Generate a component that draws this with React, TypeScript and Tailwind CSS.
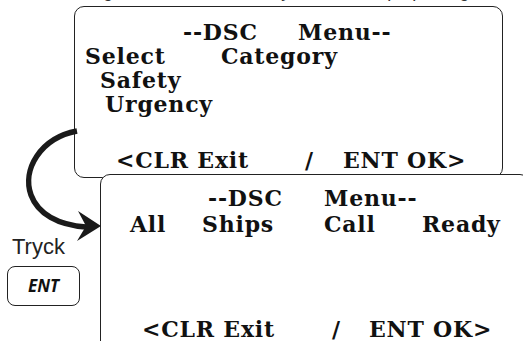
import React from "react";

// LCD-style screen font
const serif = { fontFamily: '"DejaVu Serif", serif' };

const Word: React.FC<{ w?: string; children: React.ReactNode }> = ({ w, children }) => (
  <span className={`inline-block shrink-0 ${w ?? ""}`}>{children}</span>
);

const App: React.FC = () => {
  return (
    <div className="relative w-[523px] h-[341px] overflow-hidden bg-white">
      {/* cut-off line of text above the first screen */}
      <div className="flex h-[6px] overflow-hidden">
        <div
          className="-mt-[18px] pl-[88px] whitespace-pre text-[18px] leading-[18px] text-[#333]"
          style={{ fontFamily: '"Liberation Sans", sans-serif' }}
        >
          Ingen ändras i hela menyn visas åter på plats igen
        </div>
      </div>

      {/* first screen: select category */}
      <div
        className="ml-[74px] w-[429px] h-[172px] rounded-[10px] border-[1.5px] border-[#222] bg-white pt-[13px] text-[22px] font-bold leading-[24px] tracking-[0.8px] text-[#111] whitespace-pre"
        style={serif}
      >
        <div className="flex pl-[108px]">
          <Word w="w-[115px]">--DSC</Word>
          <Word>Menu--</Word>
        </div>
        <div className="flex pl-[10px]">
          <Word w="w-[136px]">Select</Word>
          <Word>Category</Word>
        </div>
        <div className="flex pl-[25px]">
          <Word>Safety</Word>
        </div>
        <div className="flex pl-[30px]">
          <Word>Urgency</Word>
        </div>
        <div className="flex pl-[41px] mt-[32px]">
          <Word w="w-[189px]">&lt;CLR Exit</Word>
          <Word w="w-[38px]">/</Word>
          <Word>ENT OK&gt;</Word>
        </div>
      </div>

      <div className="flex -mt-[4px]">
        {/* press ENT hint */}
        <div className="w-[100px] shrink-0 pt-[62px]">
          <div
            className="ml-[12px] text-[22px] leading-[22px] text-[#222]"
            style={{ fontFamily: '"Liberation Sans", sans-serif' }}
          >
            Tryck
          </div>
          <div className="ml-[7px] mt-[8px] w-[73px] h-[40px] rounded-[8px] border-[1.5px] border-[#222] flex items-center justify-center">
            <span
              className="text-[17px] font-bold italic text-[#111]"
              style={{ fontFamily: '"Open Sans", sans-serif' }}
            >
              ENT
            </span>
          </div>
        </div>

        {/* second screen: all ships call ready */}
        <div
          className="w-[430px] h-[190px] shrink-0 rounded-[10px] border-[1.5px] border-[#222] bg-white pt-[11px] text-[22px] font-bold leading-[24px] tracking-[0.8px] text-[#111] whitespace-pre"
          style={serif}
        >
          <div className="flex pl-[107px]">
            <Word w="w-[116px]">--DSC</Word>
            <Word>Menu--</Word>
          </div>
          <div className="flex pl-[29px] mt-[2px]">
            <Word w="w-[72px]">All</Word>
            <Word w="w-[122px]">Ships</Word>
            <Word w="w-[98px]">Call</Word>
            <Word>Ready</Word>
          </div>
          <div className="flex pl-[41px] mt-[81px]">
            <Word w="w-[190px]">&lt;CLR Exit</Word>
            <Word w="w-[37px]">/</Word>
            <Word>ENT OK&gt;</Word>
          </div>
        </div>
      </div>

      {/* curved arrow from the first screen to the second */}
      <svg
        className="absolute left-0 top-0 pointer-events-none"
        width="523"
        height="341"
        viewBox="0 0 523 341"
      >
        <path
          d="M77,131 C40,138 22,170 31,195 C38,214 58,225 86,227"
          fill="none"
          stroke="#1a1a1a"
          strokeWidth="5.5"
        />
        <polygon points="101,226 78,211 86,226 77,241" fill="#1a1a1a" />
      </svg>
    </div>
  );
};

export default App;
